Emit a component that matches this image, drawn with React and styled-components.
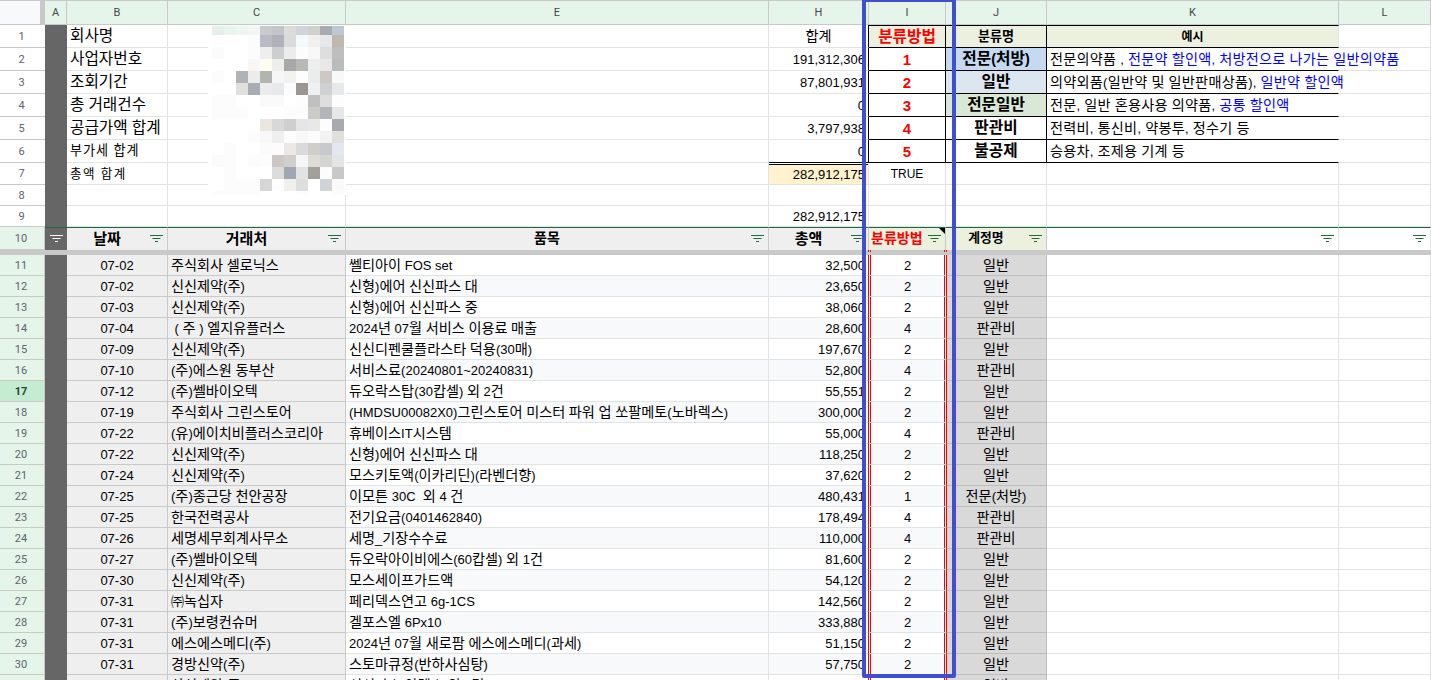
import React from "react";
import styled, { createGlobalStyle, css } from "styled-components";

const COLS = "40px 5px 22px 101px 178px 423px 100px 77px 101px 292px 92px";
const GRID = "#e2e3e3";
const DARK = "#c9c9c9";

const Global = createGlobalStyle`
  html, body { margin: 0; padding: 0; height: 680px; overflow: hidden; background: #fff; }
  * { box-sizing: border-box; }
  #root { height: 680px; overflow: hidden; }
`;

const Sheet = styled.div`
  position: relative;
  width: 1431px;
  height: 680px;
  overflow: hidden;
  font-family: "Liberation Sans", "Noto Sans CJK KR", sans-serif;
  font-size: 13px;
  line-height: 1;
  color: #000;
`;

const Row = styled.div`
  display: grid;
  grid-template-columns: ${COLS};
  height: ${(p) => p.$h}px;
`;

const Corner = styled.div`
  background: #f8f9fa;
  border-top: 1px solid ${DARK};
  border-bottom: 1px solid ${DARK};
`;

const Freeze = styled.div`
  background: ${DARK};
`;

const ColHead = styled.div`
  display: flex;
  align-items: center;
  justify-content: center;
  background: #e6f5ea;
  border-top: 1px solid ${DARK};
  border-right: 1px solid ${DARK};
  border-bottom: 1px solid ${DARK};
  color: #444746;
  font-size: 11px;
  font-family: "Roboto", "Liberation Sans", sans-serif;
`;

const RowNum = styled.div`
  display: flex;
  align-items: center;
  justify-content: center;
  grid-column: span 2;
  padding-right: 2px;
  font-size: 11px;
  font-family: "Roboto", "Liberation Sans", sans-serif;
  background: ${(p) => (p.$active ? "#c4ecd0" : p.$sel ? "#e6f5ea" : "#fff")};
  font-weight: ${(p) => (p.$active ? 700 : 400)};
  color: ${(p) => (p.$active ? "#1e4b2e" : "#5f6368")};
  border-bottom: 1px solid ${DARK};
  ${(p) => p.$sel && css`border-right: 1px solid ${DARK};`}
`;

const DarkCol = styled.div`
  display: flex;
  align-items: center;
  justify-content: center;
  background: #666;
`;

const Cell = styled.div`
  display: flex;
  align-items: center;
  min-width: 0;
  white-space: nowrap;
  overflow: ${(p) => (p.$spill ? "visible" : "hidden")};
  ${(p) => p.$spill && css`position: relative;`}
  padding: ${(p) => p.$pt || 0}px 3px 0;
  background: ${(p) => p.$bg || "#fff"};
  border-right: 1px solid ${(p) => p.$edgeR || GRID};
  border-bottom: 1px solid ${(p) => p.$edgeB || GRID};
  font-size: ${(p) => p.$fs || 13}px;
  font-weight: ${(p) => (p.$bold ? 700 : 400)};
  letter-spacing: ${(p) => p.$ls || 0}px;
  color: ${(p) => p.$color || "#000"};
  justify-content: ${(p) => (p.$align === "right" ? "flex-end" : p.$align === "center" ? "center" : "flex-start")};
  ${(p) => p.$topBlack && css`border-top: 1px solid #000;`}
  ${(p) => p.$doubleTop && css`
    border-top: 1px solid #fff;
    box-shadow: inset 0 1px 0 #000;
  `}
`;

const HeadCell = styled.div`
  position: relative;
  display: flex;
  align-items: center;
  min-width: 0;
  padding: 0 4px 0 ${(p) => p.$pl ?? 4}px;
  background: ${(p) => p.$bg || "#efefef"};
  border-top: 1px solid #1e6b3a;
  border-right: 1px solid ${(p) => p.$edge || DARK};
  font-size: ${(p) => p.$fs || 15}px;
  font-weight: 700;
  color: ${(p) => p.$color || "#000"};
  white-space: nowrap;
`;

const HeadLabel = styled.span`
  flex: 1;
  text-align: ${(p) => (p.$left ? "left" : "center")};
  padding-right: ${(p) => (p.$left ? 0 : 7)}px;
  padding-bottom: 2px;
`;

const DarkHead = styled(DarkCol)`
  border-top: 1px solid #1e6b3a;
`;

const NoteMark = styled.span`
  position: absolute;
  top: 0;
  right: 0;
  width: 0;
  height: 0;
  border-top: 6px solid #000;
  border-left: 6px solid transparent;
`;

const GapBar = styled.div`
  display: grid;
  grid-template-columns: ${COLS};
  height: 5px;
  background: ${DARK};
`;

const GapTick = styled.div`
  grid-column: 8;
  height: 2px;
  margin: 0 -1px;
  border-left: 3px double #f00;
  border-right: 3px double #f00;
`;

const BodyRow = styled(Row)`
  --tint: ${(p) => (p.$even ? "#f8f9fb" : "#fff")};
`;

const SideCell = styled(Cell)`
  background: #efefef;
  border-right-color: ${DARK};
  border-bottom-color: ${DARK};
`;

const PlainCell = styled(Cell)`
  background: var(--tint);
`;

const ClassCell = styled(Cell)`
  position: relative;
  margin: 0 -1px;
  padding: 0;
  background: var(--tint);
  border-left: 3px double #f00;
  border-right: 3px double #f00;
  justify-content: center;
`;

const AccountCell = styled(Cell)`
  background: #d9d9d9;
  border-right-color: #bdbdbd;
  border-bottom-color: #bdbdbd;
  justify-content: center;
`;

const Han = styled.span`
  font-size: 1.09em;
`;

const Plain = styled.span`
  white-space: pre;
`;

const Link = styled(Plain)`
  color: #0000ff;
`;

const Mosaic = styled.svg`
  position: absolute;
  left: 208px;
  top: 26px;
  display: block;
`;

const Highlight = styled.div`
  position: absolute;
  left: 862px;
  top: -2px;
  width: 94px;
  height: 680px;
  border: 4.5px solid #3f4fd0;
  border-radius: 2px;
  pointer-events: none;
`;

const Txt = ({ children }) => (
  <Plain>
    {String(children)
      .split(/([\uAC00-\uD7A3\u3220-\u3243]+)/)
      .map((part, i) => (i % 2 ? <Han key={i}>{part}</Han> : part))}
  </Plain>
);

const FilterIcon = ({ color = "#1e6b3a" }) => (
  <svg width="13" height="8" viewBox="0 0 13 8" style={{ flex: "none", display: "block" }}>
    <rect x="0" y="0" width="13" height="1" fill={color} />
    <rect x="2.5" y="3" width="8" height="1" fill={color} />
    <rect x="5" y="6" width="3" height="1" fill={color} />
  </svg>
);

const MOSAIC = [
  "e6f0e8 e8f4ec eef6f0 f4f6f4 c8cace c0c6cc dcdcd8 d0d4dc d0d0cc a8acb0 bcc8d4",
  "ffffff ffffff ffffff fcfcfc babac4 b0b2b8 dadcdc f2fafa f2f0ee e6e8ea c0b8ac",
  "fbfbfb ffffff ffffff fcfcfc eeeeee ccced0 ececec fcfcfc f8f8f8 dedede bebebe",
  "ffffff ffffff ffffff f8f7f5 fffdf0 eeeeea a8a8a8 b8b8b4 eeeeee e8e8e8 b8bcbc",
  "fcfcfc ffffff b0b2b4 ececec b2b4b2 f6f6f6 f2f2f0 fdfdfd ebeded cdc8c4 f8f8f8",
  "ffffff ffffff e2e0de aaacb4 ececee e8e9eb fcfcfc 9c9690 eef0f2 cfd0d2 e8e9eb",
  "fcfcfc fcfcfc ffffff ffffff fafafa fafafa ffffff fdfdfd c0c0c0 dedede fdfdfd",
  "fcfcfc fcfcfc fcfcfc ffffff ffffff ffffff fcfcfc fcfcfc cdcbc8 b2b6ba e6e7e9",
  "ffffff ffffff ffffff ffffff ece6e0 d8d8d8 cfcfcf e6e6e8 e8e8e8 fdfdfd a8aab0",
  "ffffff ffffff ffffff fcfcfc f8f8f8 efefef fcfcfc f8f8f8 fcfcfc f2f2f2 e0dfdc",
  "ffffff fcfcfc ffffff ffffff fbfbfb fcfcfc ebe8e5 dadada cfcecb c8c9cd e6e6f0",
  "fbfbfb fcfcfc ffffff fcfcfc fdfdfd ccc6c4 d0cfcd f6f6f6 dfdcd6 d4d4d0 e2e4e6",
  "ffffff fcfcfc ffffff ffffff ffffff dcdcdc 9fa8b0 e2e2e0 a3a09c fcfcfc c8c8c8",
  "ffffff fcfcfc fcfcfc fcfcfc d6d6d6 fdfdfd f0f0ee dedede ffffff d0d4d8 fafafa",
  "fcfcfc fcfcfc fcfcfc fcfcfc ffffff ffffff ffffff fdfdfd ffffff ffffff fcfcfc",
].map((r) => r.split(" "));

const PixelBlur = () => (
  <Mosaic width="138" height="169" viewBox="0 0 138 169" shapeRendering="crispEdges" aria-hidden="true">
    <rect width="138" height="169" fill="#fff" />
    {MOSAIC.map((r, y) =>
      r.map((c, x) => (
        <rect
          key={`${x}-${y}`}
          x={4 + x * 12}
          y={y === 0 ? 0 : 9 + (y - 1) * 12}
          width="12"
          height={y === 0 ? 9 : y === 14 ? 4 : 12}
          fill={`#${c}`}
        />
      ))
    )}
  </Mosaic>
);

const LETTERS = ["A", "B", "C", "E", "H", "I", "J", "K", "L"];

const TOP = [
  { n: 1, label: "회사명", fs: 14.4, total: "합계", cls: "분류방법", name: "분류명", ex: [["예시"]] },
  { n: 2, label: "사업자번호", fs: 14.4, total: "191,312,306", cls: "1", name: "전문(처방)", nameBg: "#c5d9f1",
    ex: [["전문의약품 , "], ["전문약 할인액, 처방전으로 나가는 일반의약품", 1]] },
  { n: 3, label: "조회기간", fs: 14.4, total: "87,801,931", cls: "2", name: "일반", nameBg: "#dce6f1",
    ex: [["의약외품(일반약 및 일반판매상품), "], ["일반약 할인액", 1]] },
  { n: 4, label: "총 거래건수", fs: 14.4, total: "0", cls: "3", name: "전문일반", nameBg: "#d8e8d4",
    ex: [["전문, 일반 혼용사용 의약품, "], ["공통 할인액", 1]] },
  { n: 5, label: "공급가액 합계", fs: 14.4, total: "3,797,938", cls: "4", name: "판관비",
    ex: [["전력비, 통신비, 약봉투, 정수기 등"]] },
  { n: 6, label: "부가세 합계", fs: 12, ls: 1, total: "0", cls: "5", name: "불공제",
    ex: [["승용차, 조제용 기계 등"]] },
];

const RECORDS = [
  ["07-02", "주식회사 셀로닉스", "쎌티아이 FOS set", "32,500", 2, "일반"],
  ["07-02", "신신제약(주)", "신형)에어 신신파스 대", "23,650", 2, "일반"],
  ["07-03", "신신제약(주)", "신형)에어 신신파스 중", "38,060", 2, "일반"],
  ["07-04", " ( 주 ) 엘지유플러스", "2024년 07월 서비스 이용료 매출", "28,600", 4, "판관비"],
  ["07-09", "신신제약(주)", "신신디펜쿨플라스타 덕용(30매)", "197,670", 2, "일반"],
  ["07-10", "(주)에스원 동부산", "서비스료(20240801~20240831)", "52,800", 4, "판관비"],
  ["07-12", "(주)쎌바이오텍", "듀오락스탑(30캅셀) 외 2건", "55,551", 2, "일반"],
  ["07-19", "주식회사 그린스토어", "(HMDSU00082X0)그린스토어 미스터 파워 업 쏘팔메토(노바렉스)", "300,000", 2, "일반"],
  ["07-22", "(유)에이치비플러스코리아", "휴베이스IT시스템", "55,000", 4, "판관비"],
  ["07-22", "신신제약(주)", "신형)에어 신신파스 대", "118,250", 2, "일반"],
  ["07-24", "신신제약(주)", "모스키토액(이카리딘)(라벤더향)", "37,620", 2, "일반"],
  ["07-25", "(주)종근당 천안공장", "이모튼 30C  외 4 건", "480,431", 1, "전문(처방)"],
  ["07-25", "한국전력공사", "전기요금(0401462840)", "178,494", 4, "판관비"],
  ["07-26", "세명세무회계사무소", "세명_기장수수료", "110,000", 4, "판관비"],
  ["07-27", "(주)쎌바이오텍", "듀오락아이비에스(60캅셀) 외 1건", "81,600", 2, "일반"],
  ["07-30", "신신제약(주)", "모스세이프가드액", "54,120", 2, "일반"],
  ["07-31", "㈜녹십자", "페리덱스연고 6g-1CS", "142,560", 2, "일반"],
  ["07-31", "(주)보령컨슈머", "겔포스엘 6Px10", "333,880", 2, "일반"],
  ["07-31", "에스에스메디(주)", "2024년 07월 새로팜 에스에스메디(과세)", "51,150", 2, "일반"],
  ["07-31", "경방신약(주)", "스토마큐정(반하사심탕)", "57,750", 2, "일반"],
  ["07-31", "삼성제약(주)", "신신파스 아렉스 외 1건", "64,350", 2, "일반"],
];

const HEAD_BEIGE = "#ebf1de";

export default function App() {
  return (
    <Sheet>
      <Global />
      <Row $h={25}>
        <Corner />
        <Freeze />
        {LETTERS.map((l) => (
          <ColHead key={l}>{l}</ColHead>
        ))}
      </Row>

      {TOP.map((r, i) => {
        const first = i === 0;
        return (
          <Row key={r.n} $h={23}>
            <RowNum>{r.n}</RowNum>
            <DarkCol />
            <Cell $fs={r.fs} $ls={r.ls} $spill><Txt>{r.label}</Txt></Cell>
            <Cell />
            <Cell />
            <Cell $align={first ? "center" : "right"} $edgeR="#000" $edgeB={i === 5 ? "#000" : GRID}>
              <Txt>{r.total}</Txt>
            </Cell>
            <Cell $align="center" $bold $color="#ff0000" $fs={first ? 14.4 : 15} $bg={first ? HEAD_BEIGE : "#fff"} $edgeR="#000" $edgeB="#000" $topBlack={first}>
              <Txt>{r.cls}</Txt>
            </Cell>
            <Cell
              $align="center"
              $fs={first ? 12 : 14.4}
              $bold
              $bg={first ? HEAD_BEIGE : r.nameBg || "#fff"}
              $edgeR="#000"
              $edgeB="#000"
              $topBlack={first}
            >
              <Txt>{r.name}</Txt>
            </Cell>
            <Cell
              $spill
              $fs={first ? 11 : 13}
              $ls={first ? 0 : 0.25}
              $bold={first}
              $align={first ? "center" : "left"}
              $bg={first ? HEAD_BEIGE : "#fff"}
              $edgeB="#000"
              $edgeR={first ? GRID : "transparent"}
              $topBlack={first}
            >
              {r.ex.map(([t, blue], k) =>
                blue ? <Link key={k}><Txt>{t}</Txt></Link> : <Txt key={k}>{t}</Txt>
              )}
            </Cell>
            <Cell />
          </Row>
        );
      })}

      <Row $h={22}>
        <RowNum>7</RowNum>
        <DarkCol />
        <Cell $fs={11.5} $ls={1.5} $pt={1}><Txt>총액 합계</Txt></Cell>
        <Cell />
        <Cell />
        <Cell $align="right" $bg="#fff2cc" $doubleTop>282,912,175</Cell>
        <Cell $align="center" $fs={12} $pt={1}>TRUE</Cell>
        <Cell />
        <Cell />
        <Cell />
      </Row>
      <Row $h={21}>
        <RowNum>8</RowNum>
        <DarkCol />
        <Cell />
        <Cell />
        <Cell />
        <Cell />
        <Cell />
        <Cell />
        <Cell />
        <Cell />
      </Row>
      <Row $h={21}>
        <RowNum>9</RowNum>
        <DarkCol />
        <Cell />
        <Cell />
        <Cell />
        <Cell $align="right" $pt={1}>282,912,175</Cell>
        <Cell />
        <Cell />
        <Cell />
        <Cell />
      </Row>

      <Row $h={23}>
        <RowNum $sel>10</RowNum>
        <DarkHead><FilterIcon color="#fff" /></DarkHead>
        <HeadCell><HeadLabel>날짜</HeadLabel><FilterIcon /></HeadCell>
        <HeadCell><HeadLabel>거래처</HeadLabel><FilterIcon /></HeadCell>
        <HeadCell $fs={14}><HeadLabel>품목</HeadLabel><FilterIcon /></HeadCell>
        <HeadCell><HeadLabel>총액</HeadLabel><FilterIcon /></HeadCell>
        <HeadCell $bg={HEAD_BEIGE} $fs={14} $color="#ff0000" $pl={2}>
          <HeadLabel $left>분류방법</HeadLabel>
          <FilterIcon />
          <NoteMark />
        </HeadCell>
        <HeadCell $bg={HEAD_BEIGE} $fs={12.8}><HeadLabel>계정명</HeadLabel><FilterIcon /></HeadCell>
        <HeadCell $bg="#fff" $edge={GRID}><HeadLabel /><FilterIcon /></HeadCell>
        <HeadCell $bg="#fff" $edge={GRID}><HeadLabel /><FilterIcon /></HeadCell>
      </Row>

      <GapBar>
        <GapTick />
      </GapBar>

      {RECORDS.map((r, i) => {
        const n = 11 + i;
        return (
          <BodyRow key={n} $h={21} $even={n % 2 === 0}>
            <RowNum $sel $active={n === 17}>{n}</RowNum>
            <DarkCol />
            <SideCell $align="center">{r[0]}</SideCell>
            <SideCell><Txt>{r[1]}</Txt></SideCell>
            <PlainCell><Txt>{r[2]}</Txt></PlainCell>
            <PlainCell $align="right">{r[3]}</PlainCell>
            <ClassCell>{r[4]}</ClassCell>
            <AccountCell><Txt>{r[5]}</Txt></AccountCell>
            <Cell />
            <Cell />
          </BodyRow>
        );
      })}

      <PixelBlur />
      <Highlight />
    </Sheet>
  );
}
